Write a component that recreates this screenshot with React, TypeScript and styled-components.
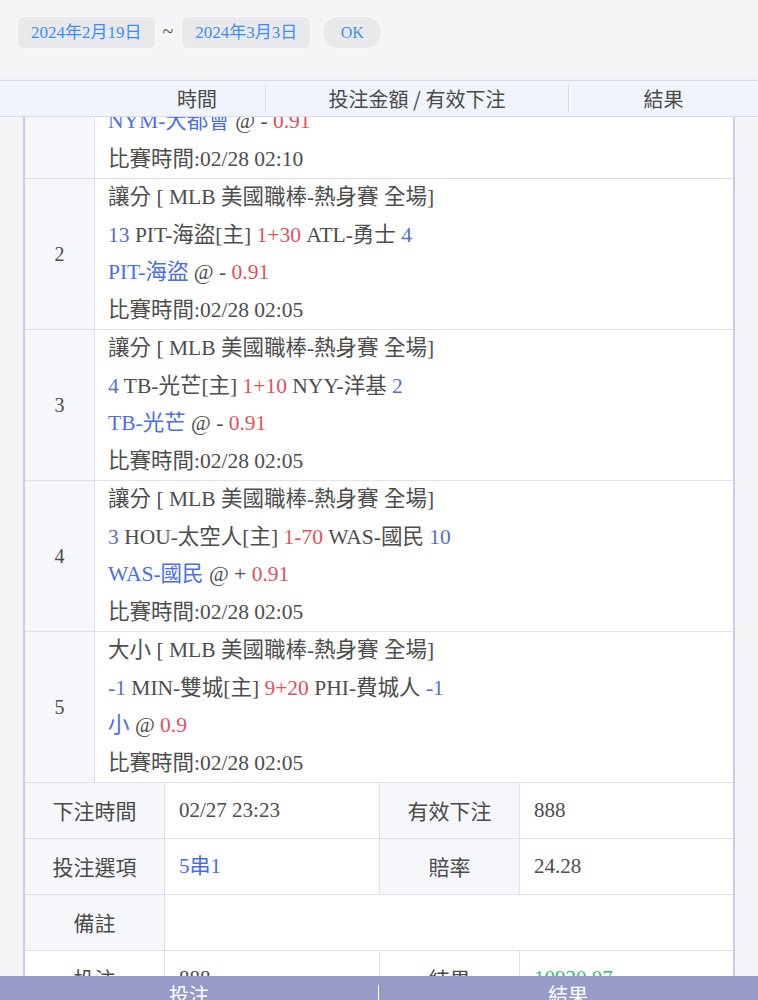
import React from 'react';
import styled, { createGlobalStyle } from 'styled-components';

const GlobalStyle = createGlobalStyle`
    html, body {
        margin: 0;
        padding: 0;
        background: #f4f4f6;
        font-family: "Liberation Serif", "Noto Sans CJK TC", serif;
        color: #4d4d4d;
    }
`;

const Page = styled.div`
    padding: 28px 23px 80px;
`;

const TopBar = styled.div`
    position: fixed;
    top: 0;
    left: 0;
    right: 0;
    height: 80px;
    background: #f5f5f7;
    box-shadow: inset 0 -4px 4px -3px rgba(0, 0, 0, 0.03);
    display: flex;
    align-items: flex-start;
    padding: 16px 0 0 17px;
    box-sizing: border-box;
    z-index: 3;
`;

const DateButton = styled.div`
    height: 31px;
    padding: 0 13px;
    border-radius: 7px;
    background: #e9e9ec;
    border: 1px solid #f9f9fb;
    color: #3d8ef2;
    font-size: 17px;
    line-height: 31px;
`;

const Tilde = styled.span`
    font-size: 20px;
    line-height: 31px;
    color: #555;
    padding: 0 8px 0 7px;
`;

const OkButton = styled(DateButton)`
    margin-left: 11px;
    width: 58px;
    padding: 0;
    text-align: center;
    border-radius: 16px;
    font-size: 16px;
`;

const ColumnHeader = styled.div`
    position: fixed;
    top: 80px;
    left: 0;
    right: 0;
    height: 37px;
    box-sizing: border-box;
    background: #f0f4fd;
    border-top: 1px solid #d7dbf1;
    border-bottom: 1px solid #d7dbf1;
    display: grid;
    grid-template-columns: 136px 303px 1fr;
    padding: 4px 0 4px 129px;
    font-family: "Noto Sans CJK TC", sans-serif;
    font-size: 20px;
    color: #4a4a4a;
    z-index: 3;
`;

const HeaderCell = styled.div`
    text-align: center;
    line-height: 27px;
    & + & {
        border-left: 1px solid #d8dbe8;
    }
`;

const Table = styled.div`
    border-left: 2px solid #c9cce6;
    border-right: 2px solid #c9cce6;
    background: #fff;
`;

const BetRow = styled.div`
    display: grid;
    grid-template-columns: 70px 1fr;
    border-bottom: 1px solid #dfe1f3;
`;

const NumberCell = styled.div`
    background: #f6f7fb;
    border-right: 1px solid #dfe1f3;
    display: flex;
    align-items: center;
    justify-content: center;
    font-size: 20px;
`;

const DetailCell = styled.div`
    padding-left: 13px;
    font-size: 21.5px;
    line-height: 37.5px;
    white-space: nowrap;
`;

const Line = styled.div``;

type ToneName = 'plain' | 'pick' | 'score' | 'odds' | 'win';

const toneColors: Record<ToneName, string> = {
    plain: '#4d4d4d',
    pick: '#4b6de6',
    score: '#5a6ec4',
    odds: '#e0515f',
    win: '#3db77a',
};

const Tone = styled.span<{ $tone: ToneName }>`
    color: ${props => toneColors[props.$tone]};
`;

const InfoRow = styled.div<{ $plain?: boolean }>`
    display: grid;
    grid-template-columns: 140px 215px 140px 1fr;
    height: 55px;
    border-bottom: 1px solid #dfe1f3;
    & > div:nth-child(odd) {
        background: ${props => (props.$plain ? '#fff' : '#f6f7fb')};
    }
`;

const InfoLabel = styled.div`
    font-family: "Noto Sans CJK TC", sans-serif;
    font-size: 21px;
    color: #4a4a4a;
    text-align: center;
    line-height: 54px;
    border-right: 1px solid #dfe1f3;
`;

const InfoValue = styled.div<{ $wide?: boolean; $tone?: ToneName }>`
    grid-column: ${props => (props.$wide ? 'span 3' : 'auto')};
    padding-left: 14px;
    font-size: 21px;
    line-height: 54px;
    color: ${props => toneColors[props.$tone || 'plain']};
    border-right: 1px solid #dfe1f3;
    &:last-child {
        border-right: none;
    }
`;

const BottomBar = styled.div`
    position: fixed;
    top: 976px;
    left: 0;
    right: 0;
    height: 50px;
    background: #969cc5;
    display: grid;
    grid-template-columns: 378px 1fr;
    font-family: "Noto Sans CJK TC", sans-serif;
    font-size: 20px;
    color: #fff;
    z-index: 3;
`;

const BottomTab = styled.div`
    position: relative;
    text-align: center;
    padding-top: 4px;
    line-height: 30px;
    & + &::before {
        content: '';
        position: absolute;
        left: 0;
        top: 9px;
        height: 24px;
        border-left: 1.5px solid #fff;
    }
`;

type Seg = [string, ToneName];

interface Bet {
    no: number;
    title: string;
    match: Seg[];
    pick: Seg[];
    time: string;
}

const bets: Bet[] = [
    {
        no: 1,
        title: '讓分 [ MLB 美國職棒-熱身賽 全場]',
        match: [['5 ', 'score'], ['STL-紅雀[主] ', 'plain'], ['1-10', 'odds'], [' NYM-大都會 ', 'plain'], ['6', 'score']],
        pick: [['NYM-大都會', 'pick'], [' @ - ', 'plain'], ['0.91', 'odds']],
        time: '02/28 02:10',
    },
    {
        no: 2,
        title: '讓分 [ MLB 美國職棒-熱身賽 全場]',
        match: [['13 ', 'score'], ['PIT-海盜[主] ', 'plain'], ['1+30', 'odds'], [' ATL-勇士 ', 'plain'], ['4', 'score']],
        pick: [['PIT-海盜', 'pick'], [' @ - ', 'plain'], ['0.91', 'odds']],
        time: '02/28 02:05',
    },
    {
        no: 3,
        title: '讓分 [ MLB 美國職棒-熱身賽 全場]',
        match: [['4 ', 'score'], ['TB-光芒[主] ', 'plain'], ['1+10', 'odds'], [' NYY-洋基 ', 'plain'], ['2', 'score']],
        pick: [['TB-光芒', 'pick'], [' @ - ', 'plain'], ['0.91', 'odds']],
        time: '02/28 02:05',
    },
    {
        no: 4,
        title: '讓分 [ MLB 美國職棒-熱身賽 全場]',
        match: [['3 ', 'score'], ['HOU-太空人[主] ', 'plain'], ['1-70', 'odds'], [' WAS-國民 ', 'plain'], ['10', 'score']],
        pick: [['WAS-國民', 'pick'], [' @ + ', 'plain'], ['0.91', 'odds']],
        time: '02/28 02:05',
    },
    {
        no: 5,
        title: '大小 [ MLB 美國職棒-熱身賽 全場]',
        match: [['-1 ', 'score'], ['MIN-雙城[主] ', 'plain'], ['9+20', 'odds'], [' PHI-費城人 ', 'plain'], ['-1', 'score']],
        pick: [['小', 'pick'], [' @ ', 'plain'], ['0.9', 'odds']],
        time: '02/28 02:05',
    },
];

const renderSegs = (segs: Seg[]) =>
    segs.map(([text, tone], i) => (
        <Tone key={i} $tone={tone}>
            {text}
        </Tone>
    ));

const App: React.FC = () => {
    return (
        <>
            <GlobalStyle />
            <TopBar>
                <DateButton>2024年2月19日</DateButton>
                <Tilde>~</Tilde>
                <DateButton>2024年3月3日</DateButton>
                <OkButton>OK</OkButton>
            </TopBar>
            <ColumnHeader>
                <HeaderCell>時間</HeaderCell>
                <HeaderCell>投注金額 / 有效下注</HeaderCell>
                <HeaderCell>結果</HeaderCell>
            </ColumnHeader>
            <Page>
                <Table>
                    {bets.map(bet => (
                        <BetRow key={bet.no}>
                            <NumberCell>{bet.no}</NumberCell>
                            <DetailCell>
                                <Line>{bet.title}</Line>
                                <Line>{renderSegs(bet.match)}</Line>
                                <Line>{renderSegs(bet.pick)}</Line>
                                <Line>比賽時間:{bet.time}</Line>
                            </DetailCell>
                        </BetRow>
                    ))}
                    <InfoRow>
                        <InfoLabel>下注時間</InfoLabel>
                        <InfoValue>02/27 23:23</InfoValue>
                        <InfoLabel>有效下注</InfoLabel>
                        <InfoValue>888</InfoValue>
                    </InfoRow>
                    <InfoRow>
                        <InfoLabel>投注選項</InfoLabel>
                        <InfoValue $tone="pick">5串1</InfoValue>
                        <InfoLabel>賠率</InfoLabel>
                        <InfoValue>24.28</InfoValue>
                    </InfoRow>
                    <InfoRow>
                        <InfoLabel>備註</InfoLabel>
                        <InfoValue $wide />
                    </InfoRow>
                    <InfoRow $plain>
                        <InfoLabel>投注</InfoLabel>
                        <InfoValue>888</InfoValue>
                        <InfoLabel>結果</InfoLabel>
                        <InfoValue $tone="win">10930.07</InfoValue>
                    </InfoRow>
                </Table>
            </Page>
            <BottomBar>
                <BottomTab>投注</BottomTab>
                <BottomTab>結果</BottomTab>
            </BottomBar>
        </>
    );
};

export default App;
